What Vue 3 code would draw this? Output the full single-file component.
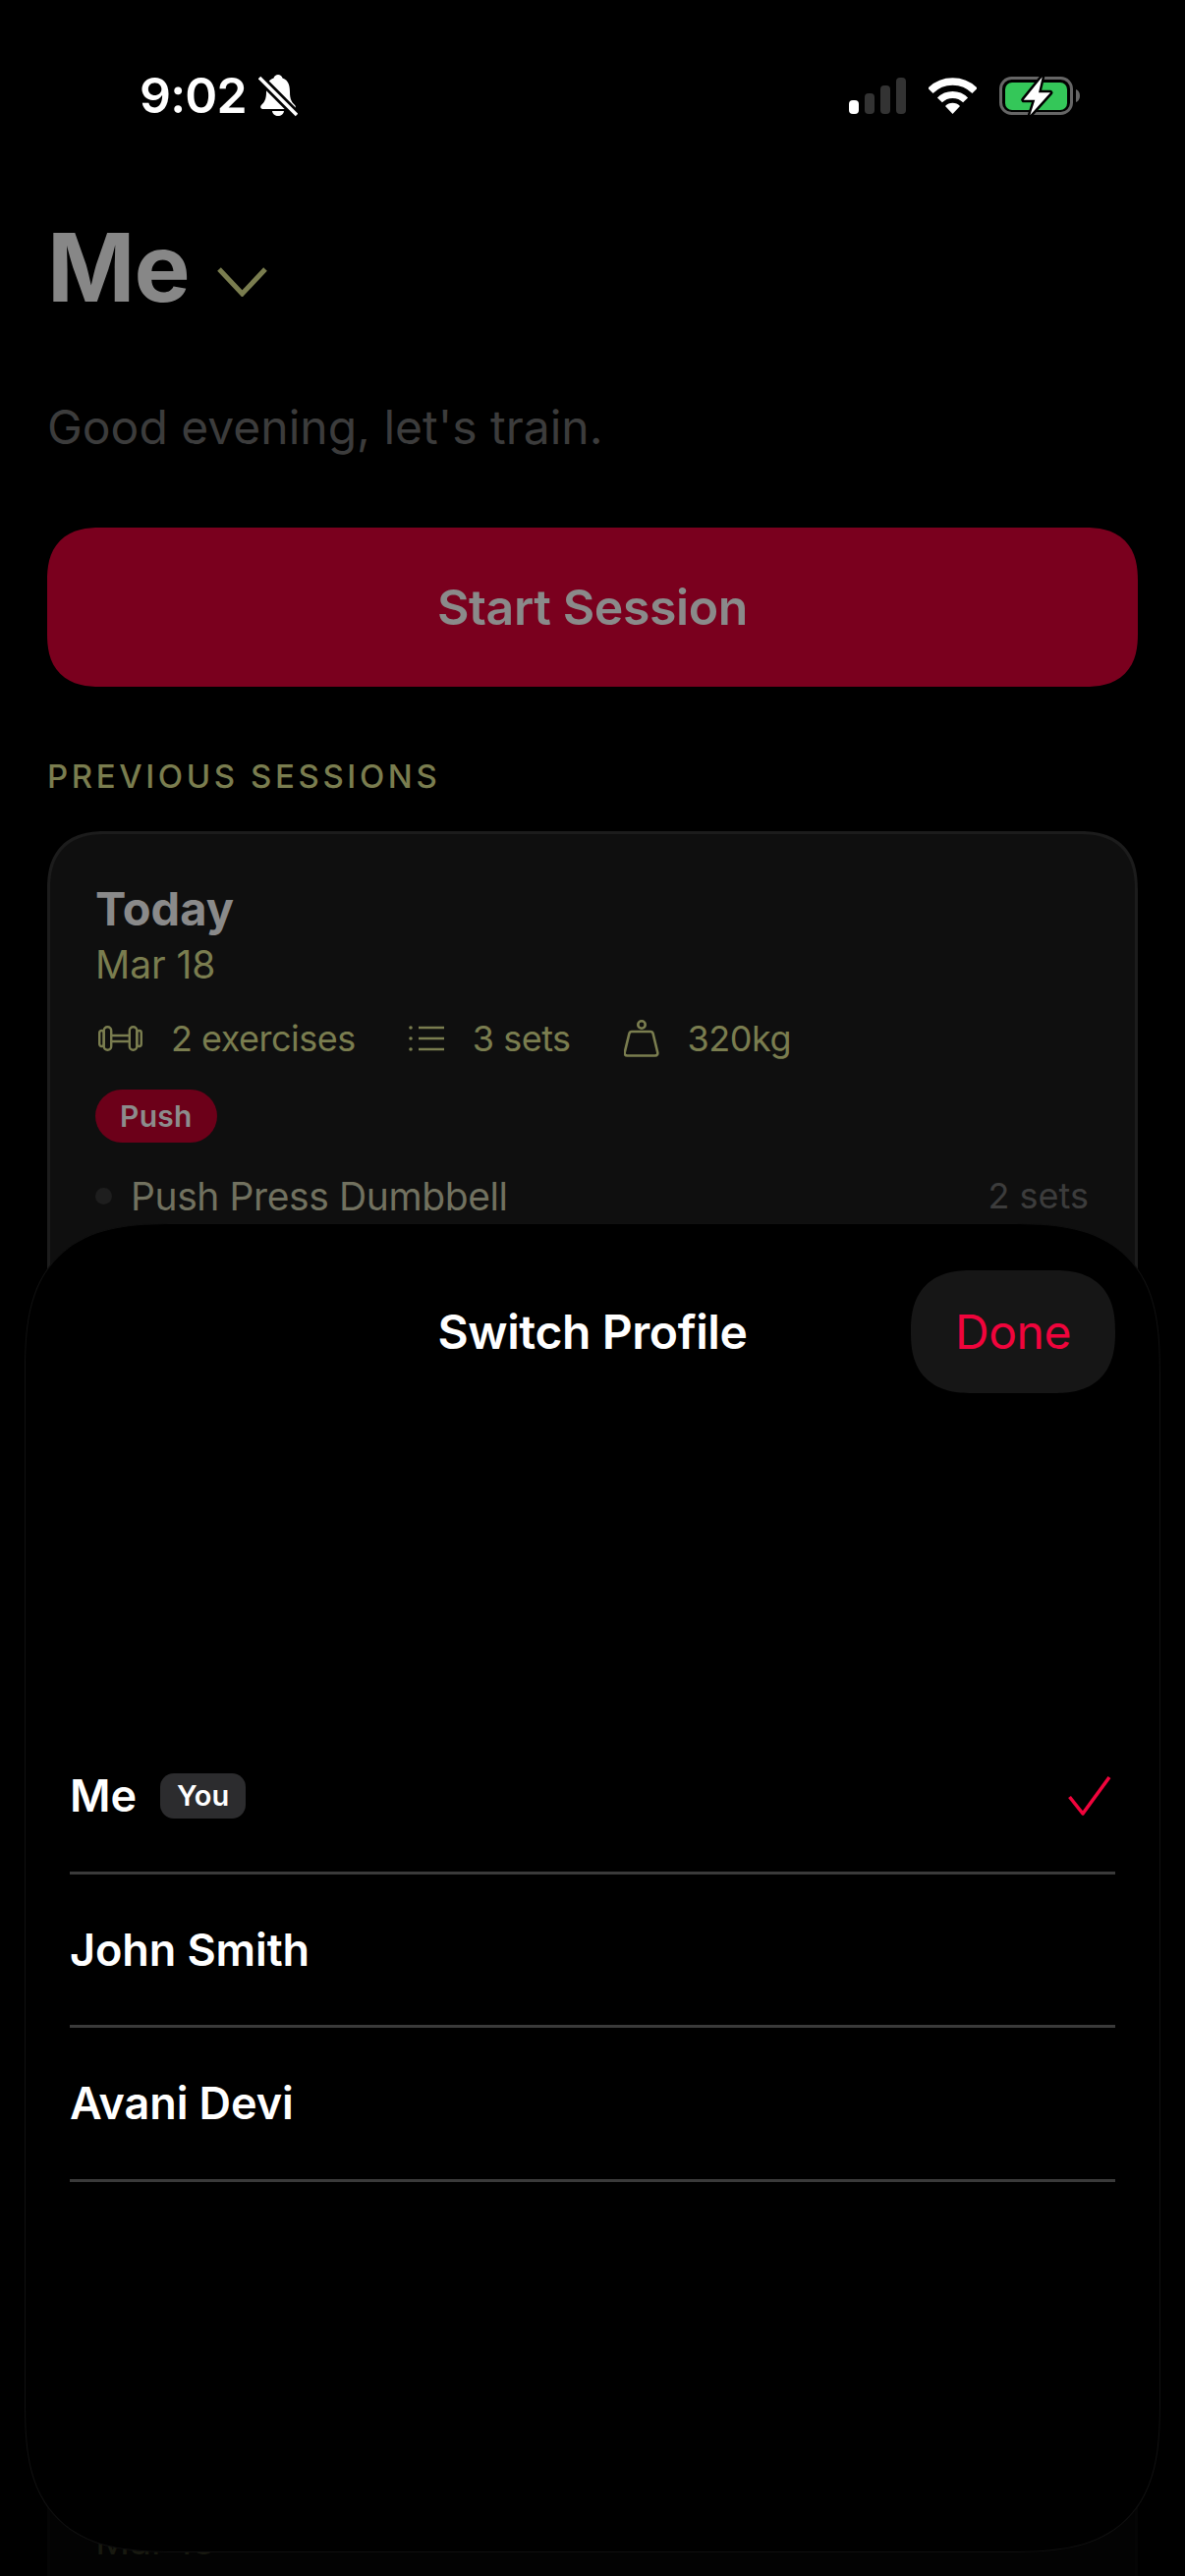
<script setup>
const stats = [
  { id: 'exercises', label: '2 exercises' },
  { id: 'sets', label: '3 sets' },
  { id: 'volume', label: '320kg' }
]
const profiles = [
  { name: 'Me', you: true, active: true },
  { name: 'John Smith' },
  { name: 'Avani Devi' }
]
</script>

<template>
  <div class="screen">
    <div class="status-bar">
      <div class="status-left">
        <span class="time">9:02</span>
        <svg class="bell" width="40" height="44" viewBox="0 0 40 44">
          <path fill="#fff" d="M20 0c-2 0-4 1.5-4.5 3.500C9 5.500 8 12 8 18c0 7-2 10-5 13-1.500 1.500-1 4 2 4h30c3 0 3.500-2.500 2-4-3-3-5-6-5-13 0-6-1-12.500-7.500-14.500C24 1.500 22 0 20 0z" />
          <path fill="#fff" d="M14 37h12c-.5 3.500-3 5-6 5s-5.500-1.500-6-5z" />
          <path stroke="#000" stroke-width="9" d="M-1 1l38 38" />
          <path stroke="#fff" stroke-width="3.600" d="M1 3l38 38" />
        </svg>
      </div>
      <div class="status-right">
        <svg width="58" height="37" viewBox="0 0 58 37">
          <rect x="0" y="23" width="10" height="14" rx="4" fill="#fff" />
          <rect x="16" y="16" width="10" height="21" rx="4" fill="#333" />
          <rect x="32" y="8" width="10" height="29" rx="4" fill="#333" />
          <rect x="48" y="0" width="10" height="37" rx="4" fill="#333" />
        </svg>
        <svg width="49" height="37" viewBox="0 0 49 37" fill="none" stroke="#fff">
          <path stroke-width="7.500" d="M1.900 13.400a32 32 0 0 1 45.200 0" />
          <path stroke-width="7" d="M11.400 22.900a18.500 18.500 0 0 1 26.200 0" />
          <path fill="#fff" stroke="none" d="M24.500 37L17 29a10.500 10.500 0 0 1 15 0z" />
        </svg>
        <svg class="battery" width="83" height="40" viewBox="0 0 83 40">
          <rect x="1.500" y="1.500" width="72" height="36" rx="11" fill="none" stroke="#666" stroke-width="3" />
          <rect x="6" y="6" width="63" height="28" rx="7" fill="#34c759" />
          <path fill="#666" d="M78 13c3 1 4 4 4 6.500s-1 5.500-4 6.500z" />
          <path fill="#fff" stroke="#000" stroke-width="5" paint-order="stroke" stroke-linejoin="round" d="M43.700.3L24.700 23.700H36.300L31.300 39.300 52 16.300H40z" />
        </svg>
      </div>
    </div>

    <div class="page">
      <div class="title-row">
        <h1>Me</h1>
        <svg class="chevron" width="51" height="30" viewBox="0 0 51 30" fill="none" stroke="#7a7d4f" stroke-width="5">
          <path d="M2 2l23.500 25L49 2" />
        </svg>
      </div>
      <p class="greeting">Good evening, let's train.</p>
      <button class="start">Start Session</button>
      <div class="section-label">PREVIOUS SESSIONS</div>

      <div class="card first">
        <div class="card-title">Today</div>
        <div class="card-date">Mar 18</div>
        <div class="stats">
          <div v-for="s in stats" :key="s.id" class="stat">
            <svg v-if="s.id === 'exercises'" width="45" height="26" viewBox="0 0 45 26" fill="none" stroke="#7a7d4f" stroke-width="2.400">
              <rect x="1.200" y="5" width="4.500" height="16" rx="2.200" />
              <rect x="5.700" y="1.200" width="7.500" height="23.600" rx="3.700" />
              <path d="M13.200 10h18.600M13.200 16h18.600" />
              <rect x="31.800" y="1.200" width="7.500" height="23.600" rx="3.700" />
              <rect x="39.300" y="5" width="4.500" height="16" rx="2.200" />
            </svg>
            <svg v-else-if="s.id === 'sets'" width="36" height="26" viewBox="0 0 36 26" fill="none" stroke="#7a7d4f" stroke-width="2.600">
              <path d="M10 2h26M10 13h26M10 24h26" />
              <path stroke-width="3.600" stroke-linecap="round" d="M2 2h.01M2 13h.01M2 24h.01" />
            </svg>
            <svg v-else width="36" height="38" viewBox="0 0 36 38" fill="none" stroke="#7a7d4f" stroke-width="2.600" stroke-linejoin="round">
              <circle cx="18" cy="5" r="3.700" />
              <path d="M9 12h18c1.500 0 2.300.8 2.600 2l4.600 19c.5 2-.5 3.500-2.500 3.500H3.300c-2 0-3-1.500-2.500-3.500l4.600-19c.3-1.200 1.100-2 2.600-2z" />
            </svg>
            <span>{{ s.label }}</span>
          </div>
        </div>
        <span class="chip">Push</span>
        <div class="exercise">
          <span class="dot"></span>
          <span class="exercise-name">Push Press Dumbbell</span>
          <span class="exercise-sets">2 sets</span>
        </div>
      </div>

      <div class="card faded">
        <div class="card-date">Mar 18</div>
      </div>
    </div>

    <div class="sheet">
      <div class="sheet-header">
        <span class="sheet-title">Switch Profile</span>
        <button class="done">Done</button>
      </div>
      <div class="profiles">
        <div v-for="p in profiles" :key="p.name" class="profile">
          <span class="profile-name">{{ p.name }}</span>
          <span v-if="p.you" class="you">You</span>
          <svg v-if="p.active" class="check" width="44" height="42" viewBox="0 0 44 42" fill="none" stroke="#f0043c" stroke-width="3.600" stroke-linejoin="round">
            <path d="M1.500 22L15 39 42 2" />
          </svg>
        </div>
      </div>
    </div>
  </div>
</template>

<style>
html, body {
  margin: 0;
  background: #000;
}
</style>

<style scoped>
* {
  box-sizing: border-box;
}

.screen {
  position: relative;
  width: 1206px;
  height: 2622px;
  overflow: hidden;
  background: #000;
  font-family: 'Inter', 'Noto Sans', sans-serif;
}

.status-bar {
  display: flex;
  justify-content: space-between;
  align-items: center;
  height: 55px;
  margin-top: 70px;
  padding: 0 106px 0 142px;
}

.status-left {
  display: flex;
  align-items: center;
  gap: 12px;
}

.status-right {
  display: flex;
  align-items: center;
  gap: 23px;
}

.battery {
  overflow: visible;
}

.time {
  color: #fff;
  font-size: 50px;
  font-weight: 600;
  line-height: 55px;
  letter-spacing: -0.800px;
}

.page {
  padding: 0 48px;
}

.title-row {
  display: flex;
  align-items: center;
  gap: 28px;
  height: 110px;
  margin-top: 92px;
}

h1 {
  margin: 0;
  color: #878787;
  font-size: 96px;
  font-weight: 700;
  line-height: 110px;
  letter-spacing: -1px;
}

.chevron {
  margin-top: 30px;
}

.greeting {
  margin: 78px 0 0;
  color: #3c3c3c;
  font-size: 48px;
  line-height: 60px;
}

.start {
  display: block;
  width: 1110px;
  height: 162px;
  margin-top: 72px;
  border: 0;
  border-radius: 54px;
  corner-shape: superellipse(1.3);
  background: #7a001e;
  color: #8a8a8a;
  font-family: inherit;
  font-size: 50px;
  font-weight: 600;
  letter-spacing: -0.400px;
}

.section-label {
  margin-top: 71px;
  color: #7a7d4f;
  font-size: 33px;
  font-weight: 500;
  line-height: 40px;
  letter-spacing: 3.600px;
}

.card {
  margin-top: 36px;
  padding: 48px 47px 0 46px;
  border: 3px solid #1c1c1c;
  border-radius: 60px;
  corner-shape: superellipse(1.3);
  background: #0f0f0f;
}

.card.first {
  height: 1574px;
}

.card.faded {
  height: 400px;
  padding-top: 98px;
  opacity: 0.2;
}

.card-title {
  color: #8a8a8a;
  font-size: 47px;
  font-weight: 700;
  line-height: 56px;
}

.card-date {
  margin-top: 7px;
  color: #7a7d4f;
  font-size: 39px;
  line-height: 44px;
  letter-spacing: -0.100px;
}

.stats {
  display: flex;
  gap: 54px;
  margin-top: 31px;
  margin-left: 3px;
  color: #7a7d4f;
  font-size: 36px;
  line-height: 44px;
  letter-spacing: -0.500px;
}

.stat {
  display: flex;
  align-items: center;
  gap: 29px;
}

.chip {
  display: flex;
  align-items: center;
  width: fit-content;
  height: 54px;
  margin-top: 30px;
  padding: 0 25px;
  border-radius: 27px;
  background: #6c0019;
  color: #8c8c8c;
  font-size: 30px;
  font-weight: 600;
  letter-spacing: 0.300px;
}

.exercise {
  display: flex;
  align-items: center;
  height: 50px;
  margin-top: 29px;
}

.dot {
  width: 17px;
  height: 17px;
  margin-right: 19px;
  border-radius: 50%;
  background: #1e1e1e;
}

.exercise-name {
  flex: 1;
  color: #71715f;
  font-size: 39px;
  letter-spacing: -0.400px;
}

.exercise-sets {
  color: #3c3c3c;
  font-size: 36px;
}

.sheet {
  position: absolute;
  top: 1245px;
  left: 25px;
  width: 1156px;
  height: 1353px;
  padding: 47px 45px 0;
  border: 1px solid #101010;
  border-radius: 155px;
  corner-shape: superellipse(1.5);
  background: #000;
}

.sheet-header {
  display: grid;
  grid-template-columns: 1fr auto 1fr;
  align-items: center;
  height: 125px;
}

.sheet-title {
  grid-column: 2;
  color: #fff;
  font-size: 48px;
  font-weight: 600;
  letter-spacing: -0.400px;
}

.done {
  grid-column: 3;
  justify-self: end;
  width: 208px;
  height: 125px;
  border: 0;
  border-radius: 62px;
  corner-shape: superellipse(1.3);
  background: #161616;
  color: #f0043c;
  font-family: inherit;
  font-size: 48px;
  letter-spacing: -0.500px;
}

.profiles {
  margin-top: 333px;
}

.profile {
  display: flex;
  align-items: center;
  height: 156.600px;
  border-bottom: 3px solid #3a3a3a;
}

.profile-name {
  color: #fff;
  font-size: 45px;
  font-weight: 600;
  letter-spacing: -0.100px;
}

.you {
  display: flex;
  align-items: center;
  height: 46px;
  margin-left: 24px;
  padding: 0 17px;
  border-radius: 14px;
  background: #2c2c2e;
  color: #fff;
  font-size: 29px;
  font-weight: 600;
}

.check {
  margin-left: auto;
  margin-right: 4px;
}
</style>
